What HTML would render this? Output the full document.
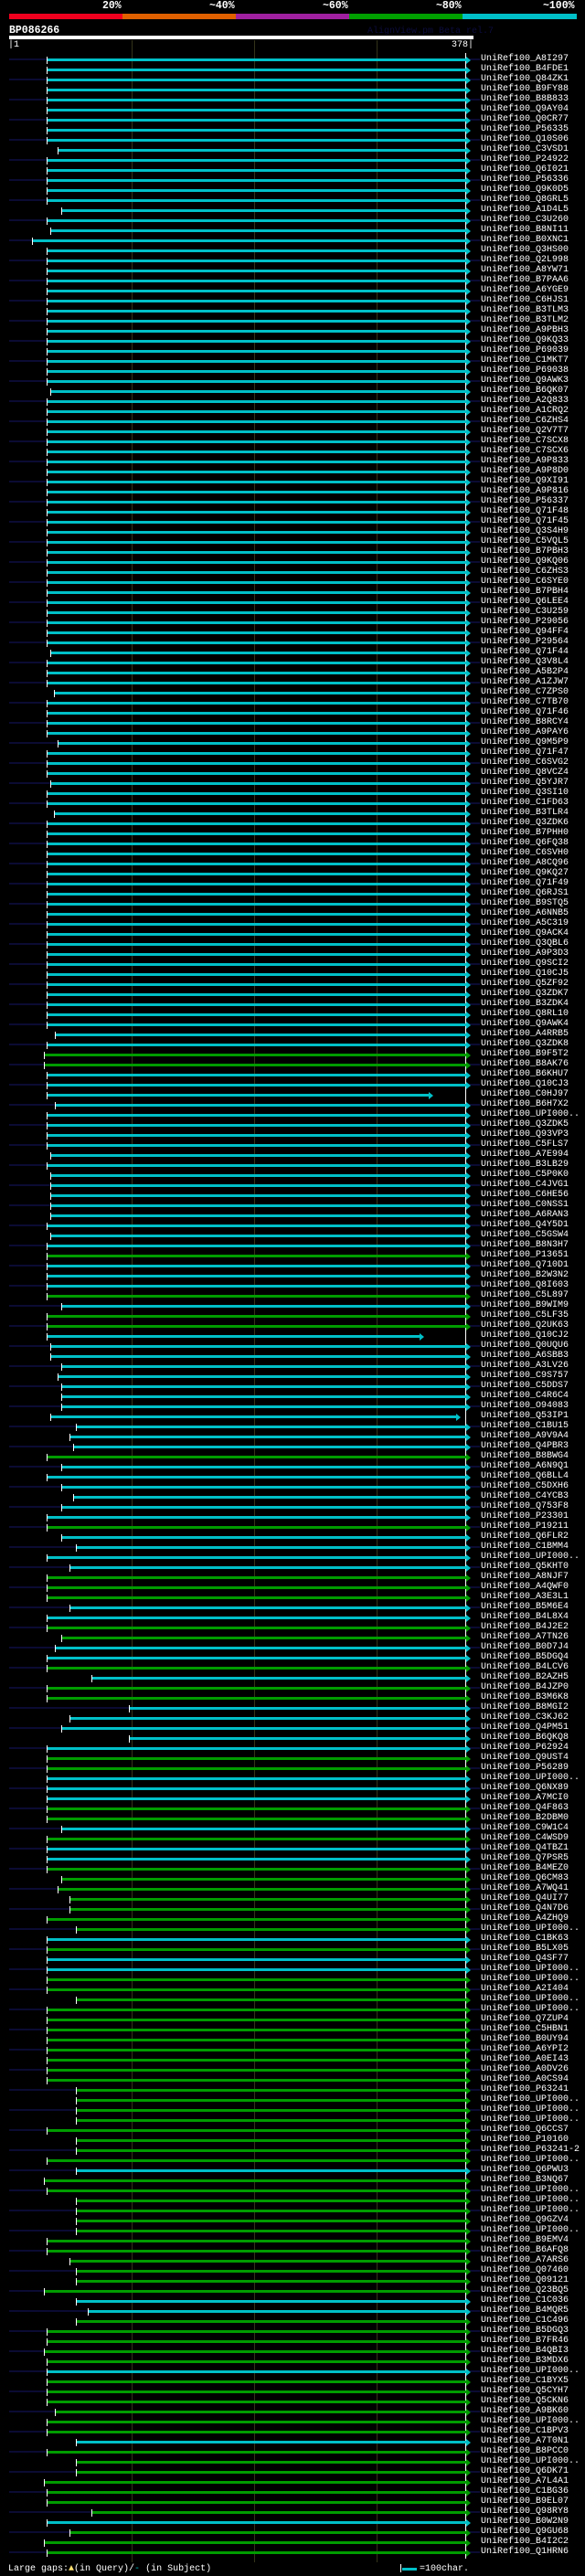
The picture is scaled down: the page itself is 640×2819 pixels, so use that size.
<!DOCTYPE html>
<html><head><meta charset="utf-8"><style>
*{margin:0;padding:0;box-sizing:border-box}
body{width:640px;height:2819px;background:#000;position:relative;overflow:hidden;font-family:"Liberation Mono","DejaVu Sans Mono",monospace;color:#fff}
.a{position:absolute}
.pc{position:absolute;top:1px;font-size:11.5px;font-weight:bold;line-height:12px}
.vl{position:absolute;top:44px;height:2760px;width:1px;background:#34341a}
#rows{position:absolute;left:0;top:59px;width:640px}
.r{position:relative;height:11px}
.r.e::before{content:"";position:absolute;left:10px;width:515px;top:5px;height:2px;background:#0b0b33}
.r i{position:absolute;left:51px;right:130px;top:5px;height:3px;background:#00c0c8}
.r i::before{content:"";position:absolute;left:0;top:-2.5px;width:1px;height:8px;background:#fff}
.r i::after{content:"";position:absolute;right:-5px;top:-2.5px;border-left:5px solid #00c0c8;border-top:4px solid transparent;border-bottom:4px solid transparent}
.r.g i{background:#009c00}
.r.g i::after{border-left-color:#009c00}
.r b{position:absolute;left:526px;top:0;font-weight:normal;font-size:10px;line-height:11px;white-space:nowrap}
</style></head><body>
<div class="pc" style="left:112px">20%</div>
<div class="pc" style="left:229px">~40%</div>
<div class="pc" style="left:353px">~60%</div>
<div class="pc" style="left:477px">~80%</div>
<div class="pc" style="left:594px">~100%</div>
<div class="a" style="left:10px;top:15px;width:124px;height:6px;background:#f0001e"></div>
<div class="a" style="left:134px;top:15px;width:124px;height:6px;background:#e06000"></div>
<div class="a" style="left:258px;top:15px;width:124px;height:6px;background:#a020a0"></div>
<div class="a" style="left:382px;top:15px;width:124px;height:6px;background:#00a000"></div>
<div class="a" style="left:506px;top:15px;width:125px;height:6px;background:#00c0c8"></div>
<div class="a" style="left:10px;top:28px;font-size:11.5px;font-weight:bold;line-height:12px">BP086266</div>
<div class="a" style="left:402px;top:29px;font-size:10px;line-height:11px;color:#0c0c3c">AlignView.pm Beta rel.7</div>
<div class="a" style="left:10px;top:39px;width:508px;height:4px;background:#fff"></div>
<div class="a" style="left:9px;top:44px;font-size:10px;line-height:11px">|1</div>
<div class="a" style="left:494px;top:44px;font-size:10px;line-height:11px">378|</div>
<div class="vl" style="left:144px"></div>
<div class="vl" style="left:278px"></div>
<div class="vl" style="left:412px"></div>
<div class="a" style="left:509px;top:58px;width:1px;height:2742px;background:#fff"></div>
<div id="rows">
<div class="r e"><i></i><b>UniRef100_A8I297</b></div>
<div class="r"><i></i><b>UniRef100_B4FDE1</b></div>
<div class="r e"><i></i><b>UniRef100_Q84ZK1</b></div>
<div class="r"><i></i><b>UniRef100_B9FY88</b></div>
<div class="r e"><i></i><b>UniRef100_B8B833</b></div>
<div class="r"><i></i><b>UniRef100_Q9AY04</b></div>
<div class="r e"><i></i><b>UniRef100_Q0CR77</b></div>
<div class="r"><i></i><b>UniRef100_P56335</b></div>
<div class="r e"><i></i><b>UniRef100_Q10S06</b></div>
<div class="r"><i style="left:63px"></i><b>UniRef100_C3VSD1</b></div>
<div class="r e"><i></i><b>UniRef100_P24922</b></div>
<div class="r"><i></i><b>UniRef100_Q6I021</b></div>
<div class="r e"><i></i><b>UniRef100_P56336</b></div>
<div class="r"><i></i><b>UniRef100_Q9K0D5</b></div>
<div class="r e"><i></i><b>UniRef100_Q8GRL5</b></div>
<div class="r"><i style="left:67px"></i><b>UniRef100_A1D4L5</b></div>
<div class="r e"><i></i><b>UniRef100_C3U260</b></div>
<div class="r"><i style="left:55px"></i><b>UniRef100_B8NI11</b></div>
<div class="r e"><i style="left:35px"></i><b>UniRef100_B0XNC1</b></div>
<div class="r"><i></i><b>UniRef100_Q3HS00</b></div>
<div class="r e"><i></i><b>UniRef100_Q2L998</b></div>
<div class="r"><i></i><b>UniRef100_A8YW71</b></div>
<div class="r e"><i></i><b>UniRef100_B7PAA6</b></div>
<div class="r"><i></i><b>UniRef100_A6YGE9</b></div>
<div class="r e"><i></i><b>UniRef100_C6HJS1</b></div>
<div class="r"><i></i><b>UniRef100_B3TLM3</b></div>
<div class="r e"><i></i><b>UniRef100_B3TLM2</b></div>
<div class="r"><i></i><b>UniRef100_A9PBH3</b></div>
<div class="r e"><i></i><b>UniRef100_Q9KQ33</b></div>
<div class="r"><i></i><b>UniRef100_P69039</b></div>
<div class="r e"><i></i><b>UniRef100_C1MKT7</b></div>
<div class="r"><i></i><b>UniRef100_P69038</b></div>
<div class="r e"><i></i><b>UniRef100_Q9AWK3</b></div>
<div class="r"><i style="left:55px"></i><b>UniRef100_B6QK07</b></div>
<div class="r e"><i></i><b>UniRef100_A2Q833</b></div>
<div class="r"><i></i><b>UniRef100_A1CRQ2</b></div>
<div class="r e"><i></i><b>UniRef100_C6ZHS4</b></div>
<div class="r"><i></i><b>UniRef100_Q2V7T7</b></div>
<div class="r e"><i></i><b>UniRef100_C7SCX8</b></div>
<div class="r"><i></i><b>UniRef100_C7SCX6</b></div>
<div class="r e"><i></i><b>UniRef100_A9P833</b></div>
<div class="r"><i></i><b>UniRef100_A9P8D0</b></div>
<div class="r e"><i></i><b>UniRef100_Q9XI91</b></div>
<div class="r"><i></i><b>UniRef100_A9P816</b></div>
<div class="r e"><i></i><b>UniRef100_P56337</b></div>
<div class="r"><i></i><b>UniRef100_Q71F48</b></div>
<div class="r e"><i></i><b>UniRef100_Q71F45</b></div>
<div class="r"><i></i><b>UniRef100_Q3S4H9</b></div>
<div class="r e"><i></i><b>UniRef100_C5VQL5</b></div>
<div class="r"><i></i><b>UniRef100_B7PBH3</b></div>
<div class="r e"><i></i><b>UniRef100_Q9KQ06</b></div>
<div class="r"><i></i><b>UniRef100_C6ZHS3</b></div>
<div class="r e"><i></i><b>UniRef100_C6SYE0</b></div>
<div class="r"><i></i><b>UniRef100_B7PBH4</b></div>
<div class="r e"><i></i><b>UniRef100_Q6LEE4</b></div>
<div class="r"><i></i><b>UniRef100_C3U259</b></div>
<div class="r e"><i></i><b>UniRef100_P29056</b></div>
<div class="r"><i></i><b>UniRef100_Q94FF4</b></div>
<div class="r e"><i></i><b>UniRef100_P29564</b></div>
<div class="r"><i style="left:55px"></i><b>UniRef100_Q71F44</b></div>
<div class="r e"><i></i><b>UniRef100_Q3V8L4</b></div>
<div class="r"><i></i><b>UniRef100_A5B2P4</b></div>
<div class="r e"><i></i><b>UniRef100_A1ZJW7</b></div>
<div class="r"><i style="left:59px"></i><b>UniRef100_C7ZPS0</b></div>
<div class="r e"><i></i><b>UniRef100_C7TB70</b></div>
<div class="r"><i></i><b>UniRef100_Q71F46</b></div>
<div class="r e"><i></i><b>UniRef100_B8RCY4</b></div>
<div class="r"><i></i><b>UniRef100_A9PAY6</b></div>
<div class="r e"><i style="left:63px"></i><b>UniRef100_Q9M5P9</b></div>
<div class="r"><i></i><b>UniRef100_Q71F47</b></div>
<div class="r e"><i></i><b>UniRef100_C6SVG2</b></div>
<div class="r"><i></i><b>UniRef100_Q8VCZ4</b></div>
<div class="r e"><i style="left:55px"></i><b>UniRef100_Q5YJR7</b></div>
<div class="r"><i></i><b>UniRef100_Q3SI10</b></div>
<div class="r e"><i></i><b>UniRef100_C1FD63</b></div>
<div class="r"><i style="left:59px"></i><b>UniRef100_B3TLR4</b></div>
<div class="r e"><i></i><b>UniRef100_Q3ZDK6</b></div>
<div class="r"><i></i><b>UniRef100_B7PHH0</b></div>
<div class="r e"><i></i><b>UniRef100_Q6FQ38</b></div>
<div class="r"><i></i><b>UniRef100_C6SVH0</b></div>
<div class="r e"><i></i><b>UniRef100_A8CQ96</b></div>
<div class="r"><i></i><b>UniRef100_Q9KQ27</b></div>
<div class="r e"><i></i><b>UniRef100_Q71F49</b></div>
<div class="r"><i></i><b>UniRef100_Q6RJS1</b></div>
<div class="r e"><i></i><b>UniRef100_B9STQ5</b></div>
<div class="r"><i></i><b>UniRef100_A6NNB5</b></div>
<div class="r e"><i></i><b>UniRef100_A5C319</b></div>
<div class="r"><i></i><b>UniRef100_Q9ACK4</b></div>
<div class="r e"><i></i><b>UniRef100_Q3QBL6</b></div>
<div class="r"><i></i><b>UniRef100_A9P3D3</b></div>
<div class="r e"><i></i><b>UniRef100_Q9SCI2</b></div>
<div class="r"><i></i><b>UniRef100_Q10CJ5</b></div>
<div class="r e"><i></i><b>UniRef100_Q5ZF92</b></div>
<div class="r"><i></i><b>UniRef100_Q3ZDK7</b></div>
<div class="r e"><i></i><b>UniRef100_B3ZDK4</b></div>
<div class="r"><i></i><b>UniRef100_Q8RL10</b></div>
<div class="r e"><i></i><b>UniRef100_Q9AWK4</b></div>
<div class="r"><i style="left:60px"></i><b>UniRef100_A4RRB5</b></div>
<div class="r e"><i></i><b>UniRef100_Q3ZDK8</b></div>
<div class="r g"><i style="left:48px"></i><b>UniRef100_B9F5T2</b></div>
<div class="r e g"><i style="left:48px"></i><b>UniRef100_B8AK76</b></div>
<div class="r"><i></i><b>UniRef100_B6KHU7</b></div>
<div class="r e"><i></i><b>UniRef100_Q10CJ3</b></div>
<div class="r"><i style="right:171px"></i><b>UniRef100_C0HJ97</b></div>
<div class="r e"><i style="left:60px"></i><b>UniRef100_B6H7X2</b></div>
<div class="r"><i></i><b>UniRef100_UPI000..</b></div>
<div class="r e"><i></i><b>UniRef100_Q3ZDK5</b></div>
<div class="r"><i></i><b>UniRef100_Q93VP3</b></div>
<div class="r e"><i></i><b>UniRef100_C5FLS7</b></div>
<div class="r"><i style="left:55px"></i><b>UniRef100_A7E994</b></div>
<div class="r e"><i></i><b>UniRef100_B3LB29</b></div>
<div class="r"><i style="left:55px"></i><b>UniRef100_C5P0K0</b></div>
<div class="r e"><i style="left:55px"></i><b>UniRef100_C4JVG1</b></div>
<div class="r"><i style="left:55px"></i><b>UniRef100_C6HE56</b></div>
<div class="r e"><i style="left:55px"></i><b>UniRef100_C0NSS1</b></div>
<div class="r"><i style="left:55px"></i><b>UniRef100_A6RAN3</b></div>
<div class="r e"><i></i><b>UniRef100_Q4Y5D1</b></div>
<div class="r"><i style="left:55px"></i><b>UniRef100_C5GSW4</b></div>
<div class="r e"><i></i><b>UniRef100_B8N3H7</b></div>
<div class="r g"><i></i><b>UniRef100_P13651</b></div>
<div class="r e"><i></i><b>UniRef100_Q710D1</b></div>
<div class="r"><i></i><b>UniRef100_B2W3N2</b></div>
<div class="r e"><i></i><b>UniRef100_Q8I603</b></div>
<div class="r g"><i></i><b>UniRef100_C5L897</b></div>
<div class="r e"><i style="left:67px"></i><b>UniRef100_B9WIM9</b></div>
<div class="r g"><i></i><b>UniRef100_C5LF35</b></div>
<div class="r e g"><i></i><b>UniRef100_Q2UK63</b></div>
<div class="r"><i style="right:181px"></i><b>UniRef100_Q10CJ2</b></div>
<div class="r e"><i style="left:55px"></i><b>UniRef100_Q0UQU6</b></div>
<div class="r"><i style="left:55px"></i><b>UniRef100_A6SBB3</b></div>
<div class="r e"><i style="left:67px"></i><b>UniRef100_A3LV26</b></div>
<div class="r"><i style="left:63px"></i><b>UniRef100_C9S757</b></div>
<div class="r e"><i style="left:67px"></i><b>UniRef100_C5DDS7</b></div>
<div class="r"><i style="left:67px"></i><b>UniRef100_C4R6C4</b></div>
<div class="r e"><i style="left:67px"></i><b>UniRef100_O94083</b></div>
<div class="r"><i style="left:55px;right:141px"></i><b>UniRef100_Q53IP1</b></div>
<div class="r e"><i style="left:83px"></i><b>UniRef100_C1BU15</b></div>
<div class="r"><i style="left:76px"></i><b>UniRef100_A9V9A4</b></div>
<div class="r e"><i style="left:80px"></i><b>UniRef100_Q4PBR3</b></div>
<div class="r g"><i></i><b>UniRef100_B8BWG4</b></div>
<div class="r e"><i style="left:67px"></i><b>UniRef100_A6N9Q1</b></div>
<div class="r"><i></i><b>UniRef100_Q6BLL4</b></div>
<div class="r e"><i style="left:67px"></i><b>UniRef100_C5DXH6</b></div>
<div class="r"><i style="left:80px"></i><b>UniRef100_C4YCB3</b></div>
<div class="r e"><i style="left:67px"></i><b>UniRef100_Q753F8</b></div>
<div class="r"><i></i><b>UniRef100_P23301</b></div>
<div class="r e g"><i></i><b>UniRef100_P19211</b></div>
<div class="r"><i style="left:67px"></i><b>UniRef100_Q6FLR2</b></div>
<div class="r e"><i style="left:83px"></i><b>UniRef100_C1BMM4</b></div>
<div class="r"><i></i><b>UniRef100_UPI000..</b></div>
<div class="r e"><i style="left:76px"></i><b>UniRef100_Q5KHT0</b></div>
<div class="r g"><i></i><b>UniRef100_A8NJF7</b></div>
<div class="r e g"><i></i><b>UniRef100_A4QWF0</b></div>
<div class="r g"><i></i><b>UniRef100_A3E3L1</b></div>
<div class="r e"><i style="left:76px"></i><b>UniRef100_B5M6E4</b></div>
<div class="r"><i></i><b>UniRef100_B4L8X4</b></div>
<div class="r e g"><i></i><b>UniRef100_B4J2E2</b></div>
<div class="r g"><i style="left:67px"></i><b>UniRef100_A7TN26</b></div>
<div class="r e"><i style="left:60px"></i><b>UniRef100_B0D7J4</b></div>
<div class="r"><i></i><b>UniRef100_B5DGQ4</b></div>
<div class="r e g"><i></i><b>UniRef100_B4LCV6</b></div>
<div class="r"><i style="left:100px"></i><b>UniRef100_B2AZH5</b></div>
<div class="r e g"><i></i><b>UniRef100_B4JZP0</b></div>
<div class="r g"><i></i><b>UniRef100_B3M6K8</b></div>
<div class="r e"><i style="left:141px"></i><b>UniRef100_B8MGI2</b></div>
<div class="r"><i style="left:76px"></i><b>UniRef100_C3KJ62</b></div>
<div class="r e"><i style="left:67px"></i><b>UniRef100_Q4PM51</b></div>
<div class="r"><i style="left:141px"></i><b>UniRef100_B6QKQ8</b></div>
<div class="r e"><i></i><b>UniRef100_P62924</b></div>
<div class="r g"><i></i><b>UniRef100_Q9UST4</b></div>
<div class="r e g"><i></i><b>UniRef100_P56289</b></div>
<div class="r"><i></i><b>UniRef100_UPI000..</b></div>
<div class="r e"><i></i><b>UniRef100_Q6NX89</b></div>
<div class="r"><i></i><b>UniRef100_A7MCI0</b></div>
<div class="r e g"><i></i><b>UniRef100_Q4F863</b></div>
<div class="r g"><i></i><b>UniRef100_B2DBM0</b></div>
<div class="r e"><i style="left:67px"></i><b>UniRef100_C9W1C4</b></div>
<div class="r g"><i></i><b>UniRef100_C4WSD9</b></div>
<div class="r e"><i></i><b>UniRef100_Q4TBZ1</b></div>
<div class="r"><i></i><b>UniRef100_Q7PSR5</b></div>
<div class="r e g"><i></i><b>UniRef100_B4MEZ0</b></div>
<div class="r g"><i style="left:67px"></i><b>UniRef100_Q6CM83</b></div>
<div class="r e g"><i style="left:63px"></i><b>UniRef100_A7WQ41</b></div>
<div class="r g"><i style="left:76px"></i><b>UniRef100_Q4UI77</b></div>
<div class="r e g"><i style="left:76px"></i><b>UniRef100_Q4N7D6</b></div>
<div class="r g"><i></i><b>UniRef100_A4ZHQ9</b></div>
<div class="r e g"><i style="left:83px"></i><b>UniRef100_UPI000..</b></div>
<div class="r"><i></i><b>UniRef100_C1BK63</b></div>
<div class="r e g"><i></i><b>UniRef100_B5LX05</b></div>
<div class="r"><i></i><b>UniRef100_Q4SF77</b></div>
<div class="r e"><i></i><b>UniRef100_UPI000..</b></div>
<div class="r g"><i></i><b>UniRef100_UPI000..</b></div>
<div class="r e g"><i></i><b>UniRef100_A2I404</b></div>
<div class="r g"><i style="left:83px"></i><b>UniRef100_UPI000..</b></div>
<div class="r e g"><i></i><b>UniRef100_UPI000..</b></div>
<div class="r g"><i></i><b>UniRef100_Q7ZUP4</b></div>
<div class="r e g"><i></i><b>UniRef100_C5HBN1</b></div>
<div class="r g"><i></i><b>UniRef100_B0UY94</b></div>
<div class="r e g"><i></i><b>UniRef100_A6YPI2</b></div>
<div class="r g"><i></i><b>UniRef100_A0EI43</b></div>
<div class="r e g"><i></i><b>UniRef100_A0DV26</b></div>
<div class="r g"><i></i><b>UniRef100_A0CS94</b></div>
<div class="r e g"><i style="left:83px"></i><b>UniRef100_P63241</b></div>
<div class="r g"><i style="left:83px"></i><b>UniRef100_UPI000..</b></div>
<div class="r e g"><i style="left:83px"></i><b>UniRef100_UPI000..</b></div>
<div class="r g"><i style="left:83px"></i><b>UniRef100_UPI000..</b></div>
<div class="r e g"><i></i><b>UniRef100_Q6CCS7</b></div>
<div class="r g"><i style="left:83px"></i><b>UniRef100_P10160</b></div>
<div class="r e g"><i style="left:83px"></i><b>UniRef100_P63241-2</b></div>
<div class="r g"><i></i><b>UniRef100_UPI000..</b></div>
<div class="r e"><i style="left:83px"></i><b>UniRef100_Q6PWU3</b></div>
<div class="r g"><i style="left:48px"></i><b>UniRef100_B3NQ67</b></div>
<div class="r e g"><i></i><b>UniRef100_UPI000..</b></div>
<div class="r g"><i style="left:83px"></i><b>UniRef100_UPI000..</b></div>
<div class="r e g"><i style="left:83px"></i><b>UniRef100_UPI000..</b></div>
<div class="r g"><i style="left:83px"></i><b>UniRef100_Q9GZV4</b></div>
<div class="r e g"><i style="left:83px"></i><b>UniRef100_UPI000..</b></div>
<div class="r g"><i></i><b>UniRef100_B9EMV4</b></div>
<div class="r e g"><i></i><b>UniRef100_B6AFQ8</b></div>
<div class="r g"><i style="left:76px"></i><b>UniRef100_A7ARS6</b></div>
<div class="r e g"><i style="left:83px"></i><b>UniRef100_Q07460</b></div>
<div class="r g"><i style="left:83px"></i><b>UniRef100_Q09121</b></div>
<div class="r e g"><i style="left:48px"></i><b>UniRef100_Q23BQ5</b></div>
<div class="r"><i style="left:83px"></i><b>UniRef100_C1C036</b></div>
<div class="r e"><i style="left:96px"></i><b>UniRef100_B4MQR5</b></div>
<div class="r g"><i style="left:83px"></i><b>UniRef100_C1C496</b></div>
<div class="r e g"><i></i><b>UniRef100_B5DGQ3</b></div>
<div class="r g"><i></i><b>UniRef100_B7FR46</b></div>
<div class="r e g"><i style="left:48px"></i><b>UniRef100_B4QBI3</b></div>
<div class="r g"><i></i><b>UniRef100_B3MDX6</b></div>
<div class="r e"><i></i><b>UniRef100_UPI000..</b></div>
<div class="r g"><i></i><b>UniRef100_C1BYX5</b></div>
<div class="r e g"><i></i><b>UniRef100_Q5CYH7</b></div>
<div class="r g"><i></i><b>UniRef100_Q5CKN6</b></div>
<div class="r e g"><i style="left:60px"></i><b>UniRef100_A9BK60</b></div>
<div class="r g"><i></i><b>UniRef100_UPI000..</b></div>
<div class="r e g"><i></i><b>UniRef100_C1BPV3</b></div>
<div class="r"><i style="left:83px"></i><b>UniRef100_A7T0N1</b></div>
<div class="r e g"><i></i><b>UniRef100_B8PCC0</b></div>
<div class="r g"><i style="left:83px"></i><b>UniRef100_UPI000..</b></div>
<div class="r e g"><i style="left:83px"></i><b>UniRef100_Q6DK71</b></div>
<div class="r g"><i style="left:48px"></i><b>UniRef100_A7L4A1</b></div>
<div class="r e g"><i></i><b>UniRef100_C1BG36</b></div>
<div class="r g"><i></i><b>UniRef100_B9EL07</b></div>
<div class="r e g"><i style="left:100px"></i><b>UniRef100_Q98RY8</b></div>
<div class="r"><i></i><b>UniRef100_B0W2N9</b></div>
<div class="r e g"><i style="left:76px"></i><b>UniRef100_Q9GU68</b></div>
<div class="r g"><i style="left:48px"></i><b>UniRef100_B4I2C2</b></div>
<div class="r e g"><i></i><b>UniRef100_Q1HRN6</b></div>
</div>
<div class="a" style="left:9px;top:2806px;font-size:10px;line-height:11px;white-space:nowrap">Large gaps:<span style="color:#ffe070">▲</span>(in Query)/<span style="color:#00c0c8">-</span> (in Subject)</div>
<div class="a" style="left:438px;top:2806px;width:1px;height:9px;background:#fff"></div>
<div class="a" style="left:440px;top:2810px;width:16px;height:3px;background:#00c0c8"></div>
<div class="a" style="left:459px;top:2806px;font-size:10px;line-height:11px">=100char.</div>
</body></html>
